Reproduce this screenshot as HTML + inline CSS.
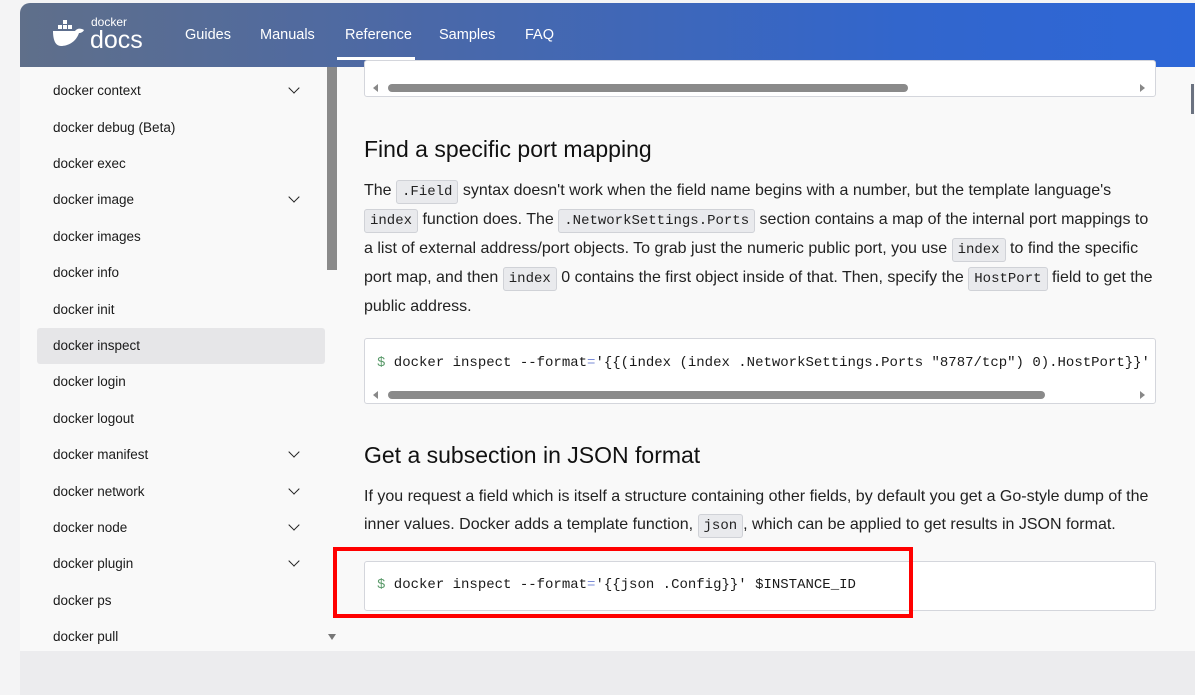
<!DOCTYPE html>
<html><head><meta charset="utf-8"><style>
*{box-sizing:border-box;margin:0;padding:0}
body{width:1195px;height:695px;overflow:hidden;background:#f4f4f5;font-family:"Liberation Sans",sans-serif;position:relative}
.abs{position:absolute}
.hdr{left:20px;top:3px;width:1175px;height:64px;background:linear-gradient(90deg,#5f6f8a 0%,#4a68a8 35%,#3266cc 75%,#2d67d8 100%);border-top-left-radius:10px}
.nav{top:27px;color:#fff;font-size:14.5px}
.side{left:20px;top:67px;width:320px;height:584px;background:#f9f9f9}
.item{left:53px;font-size:13.5px;color:#1a1a1a}
.chev{left:290px;width:8px;height:8px;border-right:1.6px solid #222;border-bottom:1.6px solid #222;transform:rotate(45deg)}
.main{left:340px;top:67px;width:855px;height:584px;background:#f9f9f9}
.code{background:#fff;border:1px solid #d4d6dc;border-radius:3px}
.mono{font-family:"Liberation Mono",monospace;font-size:14px;color:#1a1a1a;white-space:pre}
.p{left:364px;font-size:16px;color:#222;line-height:28px;width:792px}
.ic{font-family:"Liberation Mono",monospace;font-size:14px;background:#e9eaed;border:1px solid #d0d2d7;border-radius:3px;padding:3px 5px}
h2{position:absolute;left:364px;font-weight:normal;font-size:23px;color:#111}
.sb{height:8px;background:#8a8a8a;border-radius:4px}
.la{width:0;height:0;border-top:4px solid transparent;border-bottom:4px solid transparent;border-right:5px solid #888}
.ra{width:0;height:0;border-top:4px solid transparent;border-bottom:4px solid transparent;border-left:5px solid #888}
</style></head><body>
<div class="abs" style="left:0;top:0;width:20px;height:695px;background:#f4f4f5"></div>
<div class="abs hdr"></div>
<svg class="abs" style="left:52px;top:18px" width="34" height="30" viewBox="0 0 34 30"><g fill="#fff"><rect x="11" y="2" width="4" height="4"/><rect x="6" y="7" width="4" height="4"/><rect x="11" y="7" width="4" height="4"/><rect x="16" y="7" width="4" height="4"/><path d="M1 13h22c2-3 6-3 9-1-1 2-3 3-5 3-3 9-11 13-18 13C3 28 1 21 1 13z"/></g></svg>
<div class="abs" style="left:91px;top:15px;color:#fff;font-size:12px">docker</div>
<div class="abs" style="left:90px;top:27px;color:#fff;font-size:25px;line-height:26px">docs</div>
<div class="abs nav" style="left:185px">Guides</div>
<div class="abs nav" style="left:260px">Manuals</div>
<div class="abs nav" style="left:345px">Reference</div>
<div class="abs" style="left:337px;top:57px;width:78px;height:3px;background:#fff"></div>
<div class="abs nav" style="left:439px">Samples</div>
<div class="abs nav" style="left:525px">FAQ</div>
<div class="abs side"></div>
<div class="abs" style="left:37px;top:328px;width:288px;height:36px;background:#e6e6e8;border-radius:3px"></div>
<div class="abs" style="left:327px;top:67px;width:10px;height:203px;background:#8a8a8a"></div>
<div class="abs" style="left:328px;top:634px;width:0;height:0;border-left:4px solid transparent;border-right:4px solid transparent;border-top:6px solid #777"></div>
<div class="abs item" style="top:83px">docker context</div><div class="abs chev" style="top:84px"></div>
<div class="abs item" style="top:120px">docker debug (Beta)</div>
<div class="abs item" style="top:156px">docker exec</div>
<div class="abs item" style="top:192px">docker image</div><div class="abs chev" style="top:193px"></div>
<div class="abs item" style="top:229px">docker images</div>
<div class="abs item" style="top:265px">docker info</div>
<div class="abs item" style="top:302px">docker init</div>
<div class="abs item" style="top:338px">docker inspect</div>
<div class="abs item" style="top:374px">docker login</div>
<div class="abs item" style="top:411px">docker logout</div>
<div class="abs item" style="top:447px">docker manifest</div><div class="abs chev" style="top:448px"></div>
<div class="abs item" style="top:484px">docker network</div><div class="abs chev" style="top:485px"></div>
<div class="abs item" style="top:520px">docker node</div><div class="abs chev" style="top:521px"></div>
<div class="abs item" style="top:556px">docker plugin</div><div class="abs chev" style="top:557px"></div>
<div class="abs item" style="top:593px">docker ps</div>
<div class="abs item" style="top:629px">docker pull</div>
<div class="abs main"></div>
<div class="abs code" style="left:364px;top:60px;width:792px;height:37px"></div>
<div class="abs sb" style="left:388px;top:84px;width:520px"></div>
<div class="abs la" style="left:373px;top:84px"></div><div class="abs ra" style="left:1140px;top:84px"></div>
<h2 style="top:136px">Find a specific port mapping</h2>
<div class="abs p" style="top:177px">The <span class="ic">.Field</span> syntax doesn't work when the field name begins with a number, but the template language's <span class="ic">index</span> function does. The <span class="ic">.NetworkSettings.Ports</span> section contains a map of the internal port mappings to a list of external address/port objects. To grab just the numeric public port, you use <span class="ic">index</span> to find the specific port map, and then <span class="ic">index</span> 0 contains the first object inside of that. Then, specify the <span class="ic">HostPort</span> field to get the public address.</div>
<div class="abs code" style="left:364px;top:338px;width:792px;height:66px;overflow:hidden"><div class="abs mono" style="left:12px;top:16px"><span style="color:#5a9a6a">$</span> docker inspect --format<span style="color:#7a8bd6">=</span>'{{(index (index .NetworkSettings.Ports "8787/tcp") 0).HostPort}}'</div></div>
<div class="abs sb" style="left:388px;top:391px;width:657px"></div>
<div class="abs la" style="left:373px;top:391px"></div><div class="abs ra" style="left:1140px;top:391px"></div>
<h2 style="top:442px">Get a subsection in JSON format</h2>
<div class="abs p" style="top:483px">If you request a field which is itself a structure containing other fields, by default you get a Go-style dump of the inner values. Docker adds a template function, <span class="ic">json</span>, which can be applied to get results in JSON format.</div>
<div class="abs code" style="left:364px;top:561px;width:792px;height:50px"><div class="abs mono" style="left:12px;top:15px"><span style="color:#5a9a6a">$</span> docker inspect --format<span style="color:#7a8bd6">=</span>'{{json .Config}}' $INSTANCE_ID</div></div>
<div class="abs" style="left:333px;top:547px;width:580px;height:71px;border:4px solid #f00"></div>
<div class="abs" style="left:20px;top:651px;width:1175px;height:44px;background:#ececee"></div>
<div class="abs" style="left:1191px;top:84px;width:3px;height:30px;background:#6b7280"></div>
</body></html>
